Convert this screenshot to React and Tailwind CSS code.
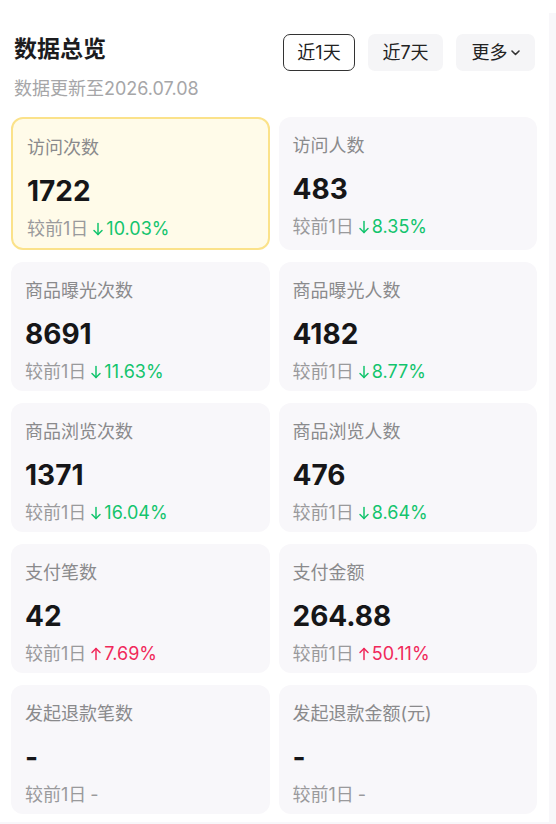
import React, { useState } from "react";

const metrics = [
  { label: "访问次数", value: "1722", dir: "down", pct: "10.03%" },
  { label: "访问人数", value: "483", dir: "down", pct: "8.35%" },
  { label: "商品曝光次数", value: "8691", dir: "down", pct: "11.63%" },
  { label: "商品曝光人数", value: "4182", dir: "down", pct: "8.77%" },
  { label: "商品浏览次数", value: "1371", dir: "down", pct: "16.04%" },
  { label: "商品浏览人数", value: "476", dir: "down", pct: "8.64%" },
  { label: "支付笔数", value: "42", dir: "up", pct: "7.69%" },
  { label: "支付金额", value: "264.88", dir: "up", pct: "50.11%" },
  { label: "发起退款笔数", value: "-", dir: null, pct: null },
  { label: "发起退款金额(元)", value: "-", dir: null, pct: null },
];

const Arrow = ({ dir }) => (
  <svg width="12" height="14" viewBox="0 0 12 14" fill="none" stroke="currentColor" strokeWidth="1.5" strokeLinecap="round" strokeLinejoin="round" className="mr-[2px]">
    {dir === "down" ? (
      <>
        <path d="M6 1.5v11" />
        <path d="M2 8.5l4 4 4-4" />
      </>
    ) : (
      <>
        <path d="M6 12.5v-11" />
        <path d="M2 5.5l4-4 4 4" />
      </>
    )}
  </svg>
);

const MetricCard = ({ m, active }) => (
  <div
    className={`rounded-[12px] pl-[14px] pr-2 pt-[17px] pb-[8px] ${
      active ? "bg-[#fffbe9] border-2 border-[#fbe28a]" : "bg-[#f8f7fa]"
    }`}
  >
    <div className="text-[18px] leading-[24px] text-[#8a8a8c]">{m.label}</div>
    <div className="mt-[15px] text-[28px] leading-[32px] font-bold text-[#161618]">{m.value}</div>
    <div className="mt-[11px] flex items-center text-[18px] leading-[22px] text-[#9a9a9c]">
      <span className="mr-[4px]">较前1日</span>
      {m.dir ? (
        <span className={`flex items-center ${m.dir === "down" ? "text-[#13c46d]" : "text-[#f0295a]"}`}>
          <Arrow dir={m.dir} />
          <span>{m.pct}</span>
        </span>
      ) : (
        <span>-</span>
      )}
    </div>
  </div>
);

export default function App() {
  const [range, setRange] = useState("1d");

  return (
    <div className="min-h-screen bg-[#f8f7fa] font-['Inter','Noto_Sans_CJK_SC',sans-serif]">
      <main className="w-[549px] bg-white pt-[13px] pb-[8px] mt-[13px]">
        <div className="px-[14px] pt-[8px] flex items-start justify-between">
          <h1 className="text-[23px] leading-[30px] font-bold text-[#1c1c1e]">数据总览</h1>
          <div className="flex gap-[13px]">
            <button
              onClick={() => setRange("1d")}
              className={`h-[37px] w-[72px] rounded-[7px] text-[18px] text-[#222] ${
                range === "1d" ? "border-[1.5px] border-[#333]" : "bg-[#f5f5f7]"
              }`}
            >
              近1天
            </button>
            <button
              onClick={() => setRange("7d")}
              className={`h-[37px] w-[75px] rounded-[7px] text-[18px] text-[#222] ${
                range === "7d" ? "border-[1.5px] border-[#333]" : "bg-[#f5f5f7]"
              }`}
            >
              近7天
            </button>
            <button className="h-[37px] w-[79px] rounded-[7px] bg-[#f5f5f7] text-[18px] text-[#222] flex items-center justify-center gap-[3px]">
              更多
              <svg width="9" height="6" viewBox="0 0 9 6" fill="none" stroke="#333" strokeWidth="1.6" strokeLinecap="round" strokeLinejoin="round">
                <path d="M1 1l3.5 3.5L8 1" />
              </svg>
            </button>
          </div>
        </div>
        <p className="px-[14px] mt-[6px] text-[18px] leading-[24px] text-[#a6a6a8]">数据更新至2026.07.08</p>

        <div className="mt-[16px] pl-[11px] pr-[12px] grid grid-cols-2 gap-x-[9px] gap-y-[12px]">
          {metrics.map((m, i) => (
            <MetricCard key={m.label} m={m} active={i === 0} />
          ))}
        </div>
      </main>
    </div>
  );
}
